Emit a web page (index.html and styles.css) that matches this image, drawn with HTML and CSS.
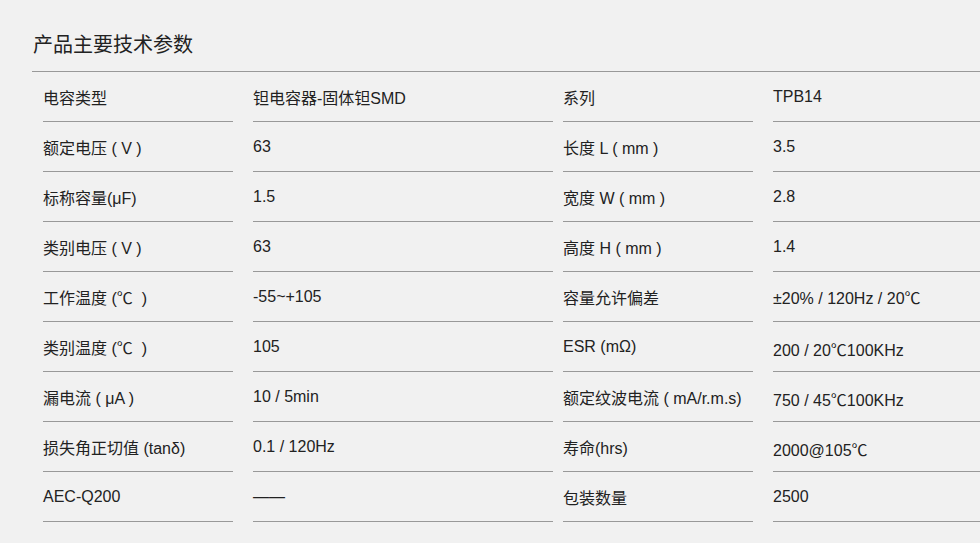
FILE: index.html
```html
<!DOCTYPE html>
<html lang="zh-CN">
<head>
<meta charset="utf-8">
<title>产品主要技术参数</title>
<link rel="stylesheet" href="styles.css">
</head>
<body>
<div class="wrap">
  <h2 class="title">产品主要技术参数</h2>
  <div class="params">
    <div class="row"><div class="c k">电容类型</div><div class="c v">钽电容器-固体钽SMD</div><div class="c k2">系列</div><div class="c v">TPB14</div></div>
    <div class="row"><div class="c k">额定电压 ( V )</div><div class="c v">63</div><div class="c k2">长度 L ( mm )</div><div class="c v">3.5</div></div>
    <div class="row"><div class="c k">标称容量(μF)</div><div class="c v">1.5</div><div class="c k2">宽度 W ( mm )</div><div class="c v">2.8</div></div>
    <div class="row"><div class="c k">类别电压 ( V )</div><div class="c v">63</div><div class="c k2">高度 H ( mm )</div><div class="c v">1.4</div></div>
    <div class="row"><div class="c k">工作温度 (℃  )</div><div class="c v">-55~+105</div><div class="c k2">容量允许偏差</div><div class="c v">±20% / 120Hz / 20℃</div></div>
    <div class="row"><div class="c k">类别温度 (℃  )</div><div class="c v">105</div><div class="c k2">ESR (mΩ)</div><div class="c v lo">200 / 20℃100KHz</div></div>
    <div class="row"><div class="c k">漏电流 ( μA )</div><div class="c v">10 / 5min</div><div class="c k2">额定纹波电流 ( mA/r.m.s)</div><div class="c v lo">750 / 45℃100KHz</div></div>
    <div class="row"><div class="c k">损失角正切值 (tanδ)</div><div class="c v">0.1 / 120Hz</div><div class="c k2">寿命(hrs)</div><div class="c v lo">2000@105℃</div></div>
    <div class="row"><div class="c k">AEC-Q200</div><div class="c v">——</div><div class="c k2">包装数量</div><div class="c v">2500</div></div>
  </div>
</div>
</body>
</html>
```
FILE: styles.css
```css
html, body {
  margin: 0;
  padding: 0;
  background: #f1f1f1;
  overflow: hidden;
}
body {
  font-family: "Liberation Sans", Arial, "Noto Sans CJK SC", sans-serif;
  font-size: 16px;
  color: #222;
}
.wrap {
  padding-left: 33px;
  width: 1400px;
}
.title {
  margin: 0;
  font-weight: normal;
  font-size: 20px;
  line-height: 30px;
  padding: 30px 0 11px 0;
  margin-left: -1px;
  padding-left: 1px;
  border-bottom: 1px solid #999;
  color: #222;
}
.params {
  padding-left: 10px;
}
.row {
  display: flex;
}
.c {
  height: 49px;
  border-bottom: 1px solid #999;
  display: flex;
  align-items: center;
  white-space: pre;
  flex: none;
}
.lo {
  padding-top: 4px;
  height: 45px;
}
.k {
  width: 190px;
  margin-right: 20px;
}
.v {
  width: 300px;
  margin-right: 10px;
}
.k2 {
  width: 190px;
  margin-right: 20px;
}
```
